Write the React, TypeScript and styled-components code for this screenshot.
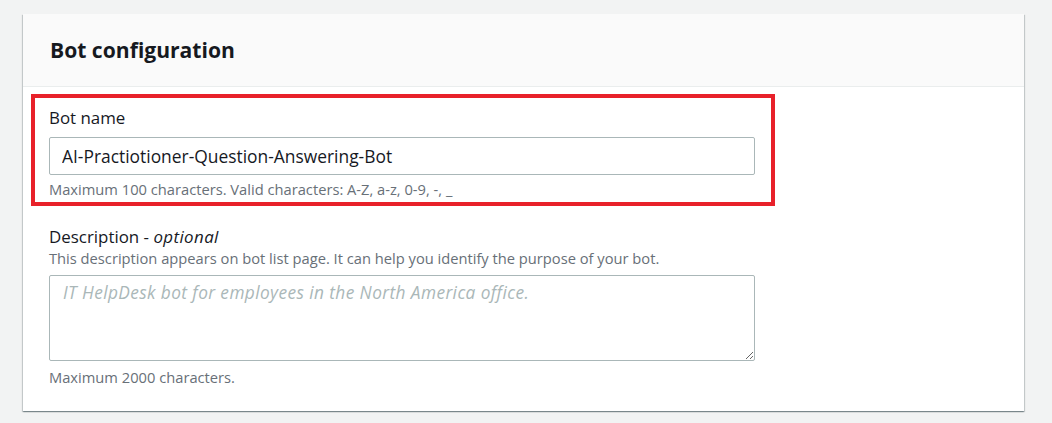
import React from "react";
import styled, { createGlobalStyle } from "styled-components";

const GlobalStyle = createGlobalStyle`
  html, body {
    margin: 0;
    padding: 0;
    background: #f2f3f3;
    font-family: "Open Sans", "Noto Sans", Arial, sans-serif;
    color: #16191f;
  }
  * { box-sizing: border-box; }
`;

const Page = styled.div`
  padding: 14px 28px 12px 23px;
`;

const Card = styled.section`
  background: #ffffff;
  box-shadow: 0 1px 1px 0 rgba(0, 28, 36, 0.3), 1px 1px 1px 0 rgba(0, 28, 36, 0.15),
    -1px 1px 1px 0 rgba(0, 28, 36, 0.15);
`;

const Header = styled.header`
  height: 73px;
  display: flex;
  align-items: center;
  padding-left: 27px;
  background: #fafafa;
  border-bottom: 1px solid #eaeded;
`;

const Title = styled.h2`
  margin: 0;
  font-size: 21.1px;
  line-height: 24px;
  font-weight: 700;
  color: #16191f;
`;

const Body = styled.div`
  padding: 7px 0 25px 8px;
  display: flex;
  flex-direction: column;
`;

const Field = styled.div<{ $highlight?: boolean }>`
  display: flex;
  flex-direction: column;
  ${({ $highlight }) =>
    $highlight
      ? `
    width: 744px;
    border: 4px solid #e8212a;
    padding: 9px 16px 4px 14px;
  `
      : `
    width: 706px;
    margin: 20px 0 0 18px;
  `}
`;

const Label = styled.label`
  font-size: 16.9px;
  line-height: 22px;
  color: #16191f;
`;

const Optional = styled.i`
  font-style: italic;
  letter-spacing: 0.4px;
`;

const Hint = styled.div<{ $gap?: number }>`
  font-size: 14.7px;
  line-height: 18px;
  color: #687078;
  margin-top: ${({ $gap }) => $gap ?? 0}px;
  white-space: nowrap;
`;

const TextInput = styled.input`
  margin-top: 8px;
  width: 100%;
  height: 38px;
  border: 1px solid #aab7b8;
  border-radius: 2px;
  padding: 0 12px;
  font-family: inherit;
  font-size: 17.4px;
  color: #16191f;
  background: #fff;
  outline: none;
`;

const TextArea = styled.textarea`
  margin-top: 8px;
  width: 100%;
  height: 86px;
  border: 1px solid #aab7b8;
  border-radius: 2px;
  padding: 6px 13px;
  font-family: inherit;
  font-size: 17.3px;
  line-height: 22px;
  color: #16191f;
  background: #fff;
  outline: none;
  resize: vertical;
  display: block;

  &::placeholder {
    color: #aab7b8;
    font-style: italic;
    letter-spacing: 0.4px;
  }
`;

export default function App() {
  return (
    <>
      <GlobalStyle />
      <Page>
        <Card>
          <Header>
            <Title>Bot configuration</Title>
          </Header>
          <Body>
            <Field $highlight>
              <Label>Bot name</Label>
              <TextInput defaultValue="AI-Practiotioner-Question-Answering-Bot" />
              <Hint $gap={5}>Maximum 100 characters. Valid characters: A-Z, a-z, 0-9, -, _</Hint>
            </Field>
            <Field>
              <Label>
                Description - <Optional>optional</Optional>
              </Label>
              <Hint $gap={1}>
                This description appears on bot list page. It can help you identify the purpose of your bot.
              </Hint>
              <TextArea placeholder="IT HelpDesk bot for employees in the North America office." />
              <Hint $gap={7}>Maximum 2000 characters.</Hint>
            </Field>
          </Body>
        </Card>
      </Page>
    </>
  );
}
